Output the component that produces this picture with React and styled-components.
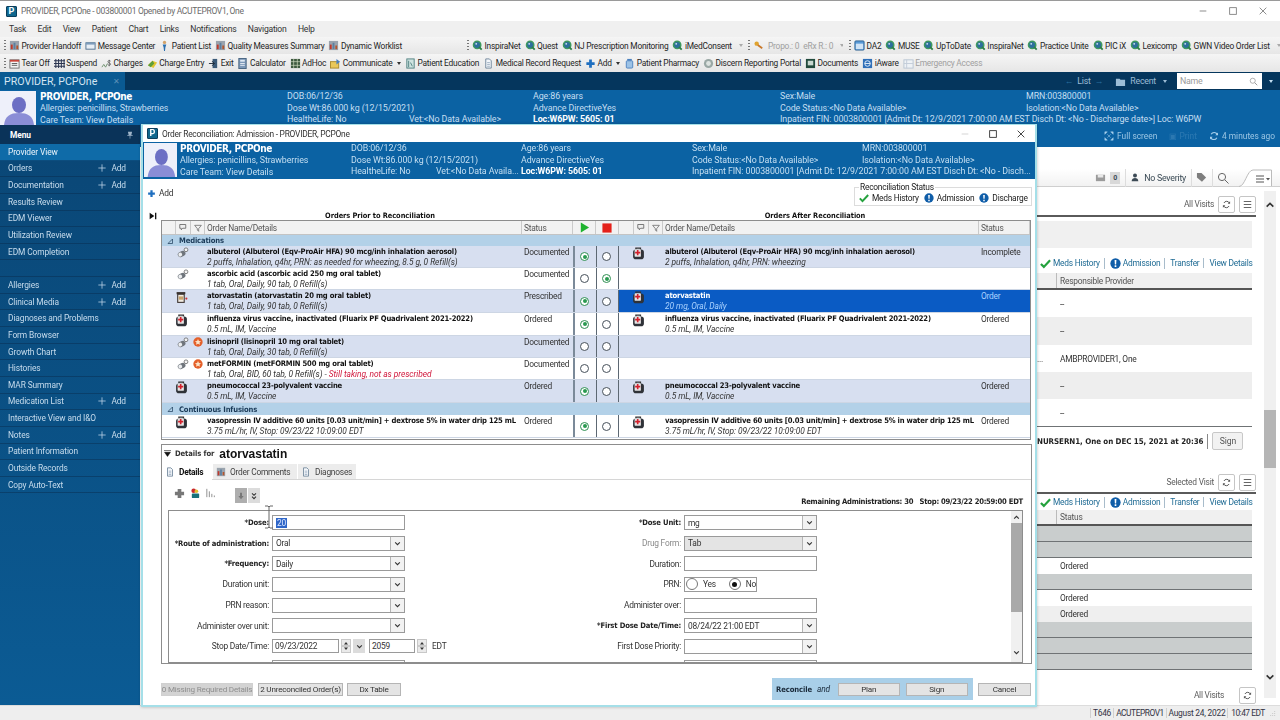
import React from 'react';
import styled, { createGlobalStyle } from 'styled-components';

const GlobalStyle = createGlobalStyle`
  html, body { margin: 0; padding: 0; width: 1280px; height: 720px; overflow: hidden; background: #fff; }
  * { box-sizing: border-box; }
`;

const UI = `Roboto, "Liberation Sans", sans-serif`;
const BOLD = `"DejaVu Sans Condensed", "DejaVu Sans", Roboto, sans-serif`;

const Page = styled.div`
  position: relative; width: 1280px; height: 720px; overflow: hidden; display: flex; flex-direction: column;
  font-family: ${UI}; font-size: 8.4px; letter-spacing: -0.23px; color: #1c1c1c; filter: blur(0.3px);
`;

/* ---------- drawings ---------- */
const Svg = ({ size = 12, children, style }) => (
  <svg width={size} height={size} viewBox="0 0 12 12" style={{ flex: 'none', ...style }}>{children}</svg>
);

const icons = {
  chart: <><rect x="1" y="1" width="10" height="10" fill="#9aa3ad" /><rect x="2" y="5" width="2" height="5" fill="#c0392b" /><rect x="5" y="3" width="2" height="7" fill="#5c7f9f" /><rect x="8" y="6" width="2" height="4" fill="#b4552d" /></>,
  mail: <><rect x="1" y="3" width="10" height="7" fill="#e8eef5" stroke="#50708f" /><path d="M1 3h10v2H1z" fill="#7d9cbc" /></>,
  person: <><circle cx="6" cy="2.6" r="1.8" fill="#d3a36a" /><path d="M4 5h4l-1 3-.5 4h-1L5 8z" fill="#2a6fb0" /></>,
  globe: <><circle cx="5.6" cy="5.4" r="4" fill="#2d6f9c" stroke="#3f9a5e" strokeWidth="1.6" /><path d="M7.6 7.6l3 3" stroke="#2c8048" strokeWidth="2" /><circle cx="4.6" cy="4.2" r="1" fill="#cfe6f2" /></>,
  keys: <><circle cx="4" cy="4" r="2.4" fill="#e0a32e" /><rect x="5" y="5" width="6" height="2" fill="#c9782a" transform="rotate(35 6 6)" /></>,
  window: <><rect x="1" y="1" width="10" height="10" rx="1" fill="#5a9bd8" stroke="#2a5f90" /><rect x="2" y="4" width="8" height="6" fill="#cfe3f6" /></>,
  tear: <><rect x="1" y="2" width="10" height="9" fill="#f5f5f5" stroke="#6b6b6b" /><path d="M1 2h10v2H1z" fill="#c9443a" /><path d="M3 6h6M3 8h6" stroke="#555" /></>,
  suspend: <><path d="M2 1v10M5 1v10M8 1v10M11 1v10M0 3h12M0 6h12M0 9h12" stroke="#2b3550" strokeWidth="1.1" /></>,
  charges: <><path d="M1 10l2-3 2 3 2-4" stroke="#6d8f6d" fill="none" /><path d="M9 2v7M10.5 3.5C10 2.5 7.5 2.5 7.5 4s3 1.2 3 2.7-2.6 1.4-3.2.4" stroke="#444" fill="none" strokeWidth=".7" /></>,
  entry: <><path d="M1 8l5-5 5 2-4 6z" fill="#e3c52f" /><path d="M1 8l5-5 2 3-4 4z" fill="#5f9e3a" /></>,
  exit: <><rect x="5" y="1" width="5" height="10" fill="#3a5a78" /><path d="M1 6h6M4.5 3.5L7 6l-2.5 2.5" stroke="#1d2b39" fill="none" /></>,
  calc: <><rect x="2" y="0.5" width="8" height="11" fill="#7c98b8" stroke="#45617f" /><rect x="3.5" y="2" width="5" height="2" fill="#dfe9f3" /><path d="M3.5 6h5M3.5 8h5" stroke="#e8eef4" /></>,
  adhoc: <><rect x="1" y="1" width="10" height="10" fill="#3e5a3f" /><path d="M4 1v10M8 1v10M1 4h10M1 8h10" stroke="#d8e3c7" strokeWidth=".7" /></>,
  comm: <><rect x="0.5" y="4" width="9" height="7" fill="#eac85a" stroke="#a8892c" /><path d="M7 1l4 3-4 3z" fill="#4b81bf" /></>,
  book: <><rect x="2" y="1" width="8" height="10" fill="#cfe3e0" stroke="#4d7f7f" /><path d="M4 3v7M6 5l2 4" stroke="#4d7f7f" /></>,
  doc: <><path d="M3 1h4l2 2v8H3z" fill="#f3f6fa" stroke="#6e8499" /><path d="M4.5 5h3M4.5 7h3M4.5 9h3" stroke="#7890a8" strokeWidth=".7" /></>,
  plus: <path d="M4.5 1.5h3v3h3v3h-3v3h-3v-3h-3v-3h3z" fill="#1f6fc0" />,
  bottle: <><rect x="3.5" y="1" width="5" height="2" fill="#4b81bf" /><rect x="2.5" y="3" width="7" height="8" rx="1" fill="#9cc2e6" stroke="#4b81bf" /></>,
  report: <><circle cx="6" cy="6" r="5" fill="#9aa8a5" /><circle cx="6" cy="6" r="2.6" fill="#dde3e0" /></>,
  folder: <><rect x="1" y="1" width="10" height="10" fill="#214a3c" /><rect x="3" y="3" width="6" height="5" fill="#c8d8d0" /></>,
  aware: <><rect x="1" y="1" width="10" height="10" fill="#2f6fb8" /><circle cx="6" cy="6" r="3" fill="none" stroke="#e6f0fa" /><path d="M3 6h6" stroke="#e6f0fa" /></>,
  emergency: <><rect x="1" y="2" width="10" height="9" fill="#eef2f6" stroke="#b8c4d2" /><path d="M4 2v9M1 6h10" stroke="#c2ccd8" /></>,
};
const Icon = ({ kind, size }) => <Svg size={size}>{icons[kind]}</Svg>;

const MedBag = () => (
  <Svg size={13}>
    <path d="M3.6 2.6V1h4.2v1.6" fill="none" stroke="#333" strokeWidth="1.2" />
    <rect x="1" y="2.4" width="10" height="9" rx="2.6" fill="#2f3238" />
    <rect x="2.4" y="2" width="5.8" height="7" rx=".8" fill="#e6e6e6" />
    <path d="M4.5 2.8h1.5v1.6h1.6v1.5H6v1.7H4.5V5.9H2.9V4.4h1.6z" fill="#d3202c" />
  </Svg>
);
const PillIcon = () => (
  <Svg size={12}>
    <rect x="0.6" y="4.6" width="8" height="5.2" rx="2.6" fill="#6f757c" transform="rotate(-25 4 7)" />
    <rect x="1.2" y="5.2" width="3.8" height="4" rx="1.9" fill="#eceef0" transform="rotate(-25 4 7)" />
    <circle cx="9" cy="2.8" r="1.9" fill="#f4f4f4" stroke="#666" strokeWidth=".8" />
  </Svg>
);
const BottleIcon = () => (
  <Svg size={13}>
    <rect x="1.5" y="1" width="8" height="2" fill="#3b3330" />
    <rect x="2.5" y="3" width="6" height="7.5" fill="#f2ece2" stroke="#3b3330" />
    <rect x="3.5" y="5" width="4" height="3" fill="#c7a36b" />
    <circle cx="10.5" cy="7" r="1" fill="#c33" />
  </Svg>
);
const StarBadge = () => (
  <Svg size={10}>
    <circle cx="6" cy="6" r="5.6" fill="#e4602a" />
    <path d="M6 2.3l1.1 2.4 2.6.3-1.9 1.7.5 2.6L6 8l-2.3 1.3.5-2.6L2.3 5l2.6-.3z" fill="#fbe3c7" />
  </Svg>
);
const Check = ({ size = 11 }) => (
  <Svg size={size}><path d="M1 6.5l3.2 3.2L11 2.4" fill="none" stroke="#25a23e" strokeWidth="2.4" /></Svg>
);
const Alert = ({ size = 10 }) => (
  <Svg size={size}>
    <circle cx="6" cy="6" r="5.6" fill="#0f5da8" />
    <path d="M5 2.3h2L6.7 7H5.3zM5.1 8h1.8v1.8H5.1z" fill="#fff" />
  </Svg>
);
const RefreshMark = ({ color = '#555', size = 9 }) => (
  <Svg size={size}><path d="M9.8 4A4 4 0 0 0 2.6 4M2.2 8A4 4 0 0 0 9.4 8" fill="none" stroke={color} strokeWidth="1.3" /><path d="M10.8 1.8V5H7.6zM1.2 10.2V7h3.2z" fill={color} /></Svg>
);
const Chevron = ({ up, size = 7, color = '#333' }) => (
  <Svg size={size}><path d={up ? 'M2 8l4-4 4 4' : 'M2 4l4 4 4-4'} fill="none" stroke={color} strokeWidth="1.9" /></Svg>
);
const Avatar = styled(({ className }) => (
  <svg className={className} viewBox="0 0 36 34" preserveAspectRatio="none">
    <rect width="36" height="34" fill="#eef0fa" />
    <ellipse cx="19" cy="14" rx="7" ry="8" fill="#6c6fc4" />
    <path d="M4 34c1-9 6-12 15-12s14 3 15 12z" fill="#8a8dd6" />
  </svg>
))`
  display: block; flex: none; width: ${(p) => p.$w}px; height: ${(p) => p.$h}px;
`;

/* ---------- window chrome ---------- */
const TitleBar = styled.div`
  height: 21px; flex: none; background: #fff; border-top: 1px solid #9a9a9a; display: flex; align-items: center;
  padding-left: 6px; gap: 4px; color: #6a6a6a; font-size: 8.5px; letter-spacing: -0.33px;
`;
const AppLogo = styled.span`
  width: 11px; height: 11px; flex: none; background: #10678d; color: #fff; font: bold 9px/9px ${UI};
  text-align: center; border-radius: 1px; border: 1px solid #0b3e5c; letter-spacing: 0;
`;
const WinControls = styled.div`
  margin-left: auto; display: flex; align-items: center; gap: ${(p) => p.$gap || 20}px; padding-right: ${(p) => p.$pad || 12}px;
`;
const MenuBar = styled.div`
  height: 16px; flex: none; background: #f0f0f0; display: flex; align-items: center; gap: 11.4px; padding-left: 9px; color: #333; font-size: 8.6px;
`;
const ToolBar = styled.div`
  height: ${(p) => p.$h}px; flex: none; background: linear-gradient(#f5f5f5, #e6e6e6); display: flex; align-items: center;
`;
const ToolSection = styled.div`
  width: ${(p) => p.$w}px; flex: none; display: flex; align-items: center; gap: 4px; overflow: hidden;
`;
const Grip = styled.span`
  width: 2px; height: 11px; flex: none; margin: 0 -1px 0 ${(p) => p.$ml || 4}px;
  background: repeating-linear-gradient(#777 0 1px, transparent 1px 3px);
`;
const ToolItem = styled.span`
  display: inline-flex; align-items: center; gap: 1.5px; white-space: nowrap; color: ${(p) => (p.$dim ? '#a0a0a0' : '#1f1f1f')};
`;
const Caret = styled.span`
  width: 0; height: 0; flex: none; border-left: 2.5px solid transparent; border-right: 2.5px solid transparent;
  border-top: 3px solid ${(p) => p.$color || '#333'}; margin-left: 3px; margin-right: ${(p) => p.$mr || 0}px;
`;
const TabBar = styled.div`
  height: 18px; flex: none; background: #05365d; display: flex; align-items: center; color: #9dbdd6; font-size: 8.8px;
`;
const PatientTab = styled.div`
  width: 125px; height: 100%; background: #0a5a92; color: #d5e6f3; font-size: 10.6px; letter-spacing: 0; display: flex; align-items: center; padding-left: 4px;
  justify-content: space-between; padding-right: 5px;
`;
const TabClose = styled.span`
  color: #5c90b8; font-size: 8px;
`;
const ListNav = styled.div`
  margin-left: auto; display: flex; align-items: center; gap: 4px;
`;
const NavArrow = styled.span`
  color: #2a6f9f;
`;
const NameSearch = styled.div`
  width: 85px; height: 16px; background: #fff; color: #9a9a9a; display: flex; align-items: center; justify-content: space-between; padding: 0 4px 0 3px; margin-left: 6px;
`;

/* ---------- patient banner ---------- */
const Banner = styled.div`
  height: ${(p) => p.$h}px; flex: none; background: #0b62a3; display: grid; grid-template-columns: ${(p) => p.$cols};
  color: #c5dff2; font-size: 8.85px; letter-spacing: -0.08px; line-height: 11.7px; overflow: hidden; padding: ${(p) => p.$pad};
`;
const BannerCell = styled.div`
  display: flex; flex-direction: column; white-space: nowrap; min-width: 0;
`;
const BannerName = styled.div`
  color: #fff; font: bold 10px/12px ${BOLD}; letter-spacing: -0.4px;
`;
const Split = styled.div`
  display: grid; grid-template-columns: ${(p) => p.$first}px auto;
`;
const Strong = styled.span`
  color: #fff; font-weight: 700;
`;

/* ---------- app body ---------- */
const Main = styled.div`
  flex: 1; min-height: 0; display: flex;
`;
const SideMenu = styled.div`
  width: 140px; flex: none; background: linear-gradient(#0a4675, #0b5b94); color: #c7dced; font-size: 8.4px; letter-spacing: -0.1px;
  display: flex; flex-direction: column;
`;
const SideHead = styled.div`
  height: 19px; flex: none; background: #0a3359; color: #fff; font-weight: 700; display: flex; align-items: center; justify-content: space-between;
  padding: 1px 6px 0 10px;
`;
const SideRow = styled.div`
  height: 16.65px; flex: none; display: flex; align-items: center; justify-content: space-between; padding: 0 14px 0 8px;
  background: ${(p) => (p.$active ? '#0f6ba8' : 'transparent')}; color: ${(p) => (p.$active ? '#e9f3fb' : '#c7dced')};
  border-bottom: 1px solid rgba(8, 43, 76, 0.45);
`;
const SideAdd = styled.span`
  display: inline-flex; align-items: center; gap: 5px;
`;
const Content = styled.div`
  flex: 1; min-width: 0; display: flex; flex-direction: column;
`;
const TopBar = styled.div`
  height: 22px; flex: none; background: #0b62a3; display: flex; align-items: center; justify-content: flex-end; gap: 12px; padding-right: 5px;
  color: #9cc6e4; letter-spacing: 0;
`;
const TopItem = styled.span`
  display: inline-flex; align-items: center; gap: 3px; opacity: ${(p) => (p.$faint ? 0.22 : 1)};
`;
const Body = styled.div`
  flex: 1; min-height: 0; display: flex; justify-content: flex-end; background: #fff;
`;
const RightPane = styled.div`
  width: 243px; flex: none; display: flex; flex-direction: column;
`;
const TabStrip = styled.div`
  margin-top: 22px; height: 18px; flex: none; border-bottom: 1px solid #cfcfcf; display: flex; align-items: center; justify-content: flex-end;
  padding-right: 8px; gap: 4px; background: linear-gradient(#fff, #f2f2f2); color: #3a4a55; font-size: 8.8px;
`;
const CountBox = styled.span`
  width: 10px; height: 12px; background: #d8d8d8; text-align: center; line-height: 12px; font-weight: 700; font-size: 7px;
`;
const StripDivider = styled.span`
  width: 1px; height: 18px; background: #ddd; margin: 0 0.5px;
`;
const StripSpacer = styled.span`
  width: ${(p) => p.$w}px; flex: none;
`;
const PaneRow = styled.div`
  flex: 1; min-height: 0; display: flex;
`;
const PaneMain = styled.div`
  width: 219px; flex: none; display: flex; flex-direction: column; overflow: hidden;
`;
const VisitBar = styled.div`
  height: 18px; flex: none; margin-top: ${(p) => p.$top}px; display: flex; align-items: center; justify-content: flex-end; gap: 4px; color: #5c5c5c;
`;
const MiniButton = styled.span`
  width: 17px; height: 17px; flex: none; background: #fff; border: 1px solid #c5c5c5; border-radius: 2px; display: flex; align-items: center; justify-content: center;
  margin-left: ${(p) => p.$ml || 0}px;
`;
const HeavyLine = styled.div`
  height: 2px; flex: none; background: #5a5a5a; margin-top: ${(p) => p.$top}px;
`;
const GrayBox = styled.div`
  height: 27px; flex: none; background: #f0f0f0; margin: 4px 4px 0 0;
`;
const LinkRow = styled.div`
  height: 14px; flex: none; margin-top: ${(p) => p.$top}px; display: flex; align-items: center; padding-left: 3px; color: #1f6b94; white-space: nowrap;
`;
const LinkPart = styled.span`
  display: inline-flex; align-items: center; gap: 2px; padding-right: 4px; margin-right: 5px;
  border-right: ${(p) => (p.$last ? 'none' : '1px solid #a8bccb')};
`;
const PaneTable = styled.div`
  width: 215px; flex: none; margin-top: ${(p) => p.$top || 0}px;
`;
const PaneHead = styled.div`
  height: ${(p) => p.$h}px; background: #f0f0f0; border-bottom: 2px solid #555; color: #555; display: flex; align-items: center;
`;
const PaneHeadLabel = styled.span`
  margin-left: 19px; height: 100%; border-left: 1px solid #bbb; padding-left: 3px; display: flex; align-items: center;
`;
const PaneCell = styled.div`
  height: ${(p) => p.$h}px; display: flex; align-items: center; padding-left: 23px; white-space: nowrap; overflow: hidden;
  background: ${(p) => p.$bg}; border-bottom: ${(p) => (p.$line ? '1px solid #6f7375' : 'none')}; color: #333;
`;
const PaneClip = styled.span`
  width: 10px; margin-left: -23px; margin-right: 13px; overflow: hidden; display: inline-block;
`;
const SignedLine = styled.div`
  height: 18px; flex: none; margin-top: 5px; display: flex; align-items: center; font: bold 7.9px ${BOLD}; letter-spacing: -0.05px; white-space: nowrap; color: #222;
`;
const SignDivider = styled.span`
  width: 1px; height: 15px; flex: none; background: #888; margin: 0 4px;
`;
const SignBtn = styled.span`
  width: 31px; height: 18px; flex: none; border: 1px solid #c8c8c8; background: #f2f2f2; border-radius: 2px; color: #555; display: flex; align-items: center; justify-content: center;
  font: 8.6px ${UI};
`;
const PaneBar = styled.div`
  width: 12px; flex: none; margin: 4px 0 7px 8px; background: #f0f0f0; display: flex; flex-direction: column; align-items: center; padding-top: 9px;
`;
const BarThumb = styled.div`
  width: 100%; height: 58px; flex: none; background: #b5b5b5; margin-top: ${(p) => p.$top}px;
`;
const BarArrow = styled.span`
  display: flex; flex: none; margin-top: ${(p) => p.$top || 0}px;
`;
const StatusBar = styled.div`
  height: 15px; flex: none; background: #eeeeee; border-top: 1px solid #dcdcdc; display: flex; align-items: center; justify-content: flex-end; padding-right: 4px; color: #334;
`;
const StatusCell = styled.span`
  width: ${(p) => p.$w}px; flex: none; text-align: center; white-space: nowrap; border-left: 1px solid #d0d0d0;
`;
const Letters = styled.span`
  letter-spacing: ${(p) => p.$s}px;
`;

/* ---------- reconciliation modal ---------- */
const Modal = styled.div`
  position: absolute; left: 141px; top: 124px; width: 896px; height: 583px; background: #fff; border: 2px solid #a5dfe8; border-top-width: 1px;
  display: flex; flex-direction: column; box-shadow: 0 0 3px rgba(0, 0, 0, 0.25);
`;
const ModalTitle = styled.div`
  height: 17px; flex: none; display: flex; align-items: center; gap: 4px; padding-left: 4px; color: #333;
`;
const ModalBody = styled.div`
  flex: 1; min-height: 0; display: flex; flex-direction: column; padding: 0 3px 0 18px;
`;
const AddRow = styled.div`
  height: 31px; flex: none; display: flex; justify-content: space-between; margin-left: -14px;
`;
const AddButton = styled.span`
  display: inline-flex; align-items: center; gap: 3px; margin-top: 8px; height: 12px; color: #333;
`;
const StatusBox = styled.fieldset`
  width: 178px; height: 22px; margin: 5px 0 0; padding: 0 0 0 4px; border: 1px solid #dcdcdc; display: flex; align-items: center; gap: 5px; min-width: 0;
  color: #222; white-space: nowrap;
  legend { padding: 0 1px; line-height: 7px; }
`;
const StatusItem = styled.span`
  display: inline-flex; align-items: center; gap: 3px;
`;
const SideTitles = styled.div`
  height: 10px; flex: none; display: grid; grid-template-columns: 12px 438px 432px; margin-left: -12px; padding-top: 1px; align-items: center;
  font: bold 7.4px/10px ${BOLD}; letter-spacing: -0.05px; color: #111;
`;
const CenterTitle = styled.span`
  text-align: center;
`;
const GRID = '43px 317px 51px 23px 23px 44px 316px 51px';
const OrderTable = styled.div`
  width: 870px; height: 220px; flex: none; border: 1px solid #8d8d8d; background: #fff; overflow: hidden;
`;
const HeadRow = styled.div`
  height: 14px; display: grid; grid-template-columns: ${GRID}; background: #f2f2f2; border-bottom: 1px solid #c4c4c4; color: #555;
`;
const HeadCell = styled.div`
  display: flex; align-items: center; justify-content: ${(p) => (p.$center ? 'center' : p.$end ? 'flex-end' : 'flex-start')};
  padding-left: ${(p) => (p.$center || p.$end ? 0 : 2)}px; border-right: 1px solid #cacaca; min-width: 0;
`;
const HeadSlot = styled.span`
  width: ${(p) => p.$w}px; height: 100%; flex: none; border-left: 1px solid #cacaca; display: flex; align-items: center; justify-content: center;
`;
const GroupRow = styled.div`
  height: ${(p) => p.$h}px; background: #b3d1e8; display: flex; align-items: center; gap: 6px; padding-left: 5px; font: bold 7.6px ${BOLD}; letter-spacing: -0.15px; color: #1a3a58;
`;
const Row = styled.div`
  height: ${(p) => p.$h}px; display: grid; grid-template-columns: ${GRID}; background: ${(p) => (p.$shade ? '#d7dff0' : '#fff')}; border-bottom: 1px solid #cdd6e4;
`;
const IconCell = styled.div`
  display: flex; align-items: flex-start; padding: 1px 0 0 ${(p) => p.$pad}px; gap: 4px; background: ${(p) => (p.$sel ? '#0a5bc4' : 'transparent')};
`;
const NameCell = styled.div`
  padding: 1px 0 0 2px; white-space: nowrap; overflow: hidden; background: ${(p) => (p.$sel ? '#0a5bc4' : 'transparent')};
`;
const OrderName = styled.div`
  font: bold 7.6px/10px ${BOLD}; letter-spacing: -0.19px; color: ${(p) => (p.$sel ? '#fff' : '#111')};
`;
const OrderDetail = styled.div`
  font-style: italic; line-height: 10.5px; letter-spacing: -0.04px; color: ${(p) => (p.$sel ? '#a9d2ff' : '#333')};
`;
const Warning = styled.span`
  color: #d0183c;
`;
const StatusCellText = styled.div`
  padding: 1px 0 0 2px; line-height: 10px; color: ${(p) => (p.$sel ? '#a9d2ff' : '#333')}; background: ${(p) => (p.$sel ? '#0a5bc4' : 'transparent')};
`;
const RadioCell = styled.div`
  display: flex; align-items: center; justify-content: center; padding-right: 2px;
  border-left: ${(p) => (p.$heavy ? '2px solid #7b8a99' : '1px solid #5d6873')};
  border-right: ${(p) => (p.$end ? '1px solid #5d6873' : 'none')};
`;
const Radio = styled.span`
  width: 9px; height: 9px; border-radius: 50%; background: #fff; border: 1px solid ${(p) => (p.$on ? '#2f8f52' : '#46505a')}; display: flex; align-items: center; justify-content: center;
  &::after { content: ''; width: 4px; height: 4px; border-radius: 50%; background: ${(p) => (p.$on ? '#2a9a50' : 'transparent')}; }
`;
const DetailsBox = styled.div`
  width: 871px; height: 220px; flex: none; margin-top: 4px; border: 1px solid #8d8d8d; display: flex; flex-direction: column;
`;
const DetailsHead = styled.div`
  height: 19px; flex: none; display: flex; align-items: center; gap: 4px; padding: 0 0 2px 2px; font: bold 7.6px ${BOLD}; letter-spacing: -0.1px; color: #333;
`;
const DetailsDrug = styled.span`
  font: bold 12px "Liberation Sans", sans-serif; letter-spacing: 0; color: #111; margin-left: 1px;
`;
const Tabs = styled.div`
  height: 16px; flex: none; display: flex; gap: 1px; border-bottom: 1px solid #d6d6d6;
`;
const Tab = styled.div`
  width: ${(p) => p.$w}px; height: ${(p) => (p.$active ? 16 : 15)}px; display: flex; align-items: center; gap: 4px; padding-left: 3px; color: ${(p) => (p.$active ? '#111' : '#444')};
  font-weight: ${(p) => (p.$active ? 700 : 400)}; background: ${(p) => (p.$active ? '#fff' : '#ececec')};
`;
const DetailTools = styled.div`
  height: 30px; flex: none; display: flex; align-items: flex-start; padding: 8px 8px 0 12px; gap: 5px;
`;
const ToolSquare = styled.span`
  width: 12px; height: 15px; flex: none; background: ${(p) => (p.$dark ? '#aeaeae' : '#dcdcdc')}; display: flex; align-items: center; justify-content: center;
  margin-left: ${(p) => p.$ml || 0}px;
`;
const Remaining = styled.span`
  margin: 9px 0 0 auto; font: bold 7.6px ${BOLD}; letter-spacing: -0.25px; color: #222;
`;
const FormBox = styled.div`
  margin: 0 8px 0 6px; flex: 1; min-height: 0; border: 1px solid #8d8d8d; display: flex; overflow: hidden;
`;
const FormGrid = styled.div`
  flex: 1; min-width: 0; display: grid; grid-template-columns: 100px 133px 273px 133px; grid-auto-rows: 15px; row-gap: 5.67px; column-gap: 3px; padding-top: 4px; align-content: start;
`;
const Label = styled.label`
  text-align: right; align-self: center; white-space: nowrap; color: ${(p) => (p.$dim ? '#8a8a8a' : '#333')};
  ${(p) => p.$req && `font: bold 7.6px ${BOLD}; letter-spacing: -0.15px; color: #222;`}
`;
const Field = styled.div`
  height: 15px; display: flex; align-items: center; border: 1px solid #9a9a9a; background: ${(p) => (p.$gray ? '#e4e4e4' : '#fff')}; padding-left: 3px; color: #333; min-width: 0;
`;
const Selection = styled.span`
  background: #2f66c8; color: #dfe9ff; padding: 0 1px;
`;
const DropBtn = styled.span`
  margin-left: auto; width: 14px; height: 13px; flex: none; border-left: 1px solid #b4b4b4; background: #f2f2f2; display: flex; align-items: center; justify-content: center;
`;
const RadioGroup = styled.div`
  width: 73px; height: 15px; border: 1px solid #9a9a9a; display: flex; align-items: center; padding-left: 1px; gap: 13px; background: #fff;
`;
const FormRadio = styled.span`
  display: inline-flex; align-items: center; gap: 5px; color: #333;
`;
const RoundBtn = styled.span`
  width: 12px; height: 12px; border-radius: 50%; border: 1px solid #777; display: flex; align-items: center; justify-content: center; background: #fff;
  &::after { content: ''; width: 5px; height: 5px; border-radius: 50%; background: ${(p) => (p.$on ? '#111' : 'transparent')}; }
`;
const DateRow = styled.div`
  display: flex; align-items: center; width: 180px;
`;
const DateInput = styled.div`
  width: ${(p) => p.$w}px; height: 14px; flex: none; border: 1px solid #9a9a9a; padding-left: 2px; display: flex; align-items: center; background: #fff; color: #333;
`;
const Spin = styled.span`
  width: 10px; height: 14px; flex: none; margin-left: 2px; display: flex; background: #eaeaea; border: 1px solid #c8c8c8;
`;
const SmallDrop = styled.span`
  width: 12px; height: 14px; flex: none; margin: 0 4px 0 2px; background: #dcdcdc; display: flex; align-items: center; justify-content: center;
`;
const TimeZone = styled.span`
  margin-left: 5px; color: #333;
`;
const FormBar = styled.div`
  width: 11px; flex: none; background: #f0f0f0; display: flex; flex-direction: column; align-items: center; padding-top: 3px;
`;
const FormThumb = styled.div`
  width: 100%; height: 89px; margin-top: 2px; background: #a9a9a9; flex: none;
`;
const IBeam = styled.svg`
  position: absolute; left: 264px; top: 505px; z-index: 3;
`;
const Footer = styled.div`
  flex: 1; display: flex; align-items: center; padding-top: 9px;
`;
const FootBtn = styled.span`
  width: ${(p) => p.$w}px; height: 13px; flex: none; margin-right: ${(p) => p.$mr || 0}px; background: ${(p) => (p.$faded ? '#d3d3d3' : '#e4e4e4')}; border: 1px solid ${(p) => (p.$faded ? '#d0d0d0' : '#b5b5b5')};
  display: flex; align-items: center; justify-content: center; color: ${(p) => (p.$faded ? '#8e8e8e' : '#333')}; white-space: nowrap; font-size: 8.1px; letter-spacing: -0.2px;
`;
const ReconcileBox = styled.div`
  width: 201px; height: 22px; flex: none; margin-left: auto; background: #a9cfe8; display: flex; align-items: center; padding-left: 4px; color: #1a2a3a;
`;
const ReconcileLabel = styled.span`
  font: bold 7.6px ${BOLD}; letter-spacing: -0.1px; white-space: nowrap;
`;
const AndWord = styled.span`
  font-style: italic; margin: 0 8px 0 5px;
`;
const CancelWrap = styled.div`
  margin: 0 1px 0 5px;
`;

/* ---------- data ---------- */
const topLeft = [['chart', 'Provider Handoff'], ['mail', 'Message Center'], ['person', 'Patient List'], ['chart', 'Quality Measures Summary'], ['chart', 'Dynamic Worklist']];
const topMid = [['globe', 'InspiraNet'], ['globe', 'Quest'], ['globe', 'NJ Prescription Monitoring'], ['globe', 'iMedConsent']];
const topRight = [['window', 'DA2'], ['globe', 'MUSE'], ['globe', 'UpToDate'], ['globe', 'InspiraNet'], ['globe', 'Practice Unite'], ['globe', 'PIC iX'], ['globe', 'Lexicomp'], ['globe', 'GWN Video Order List']];
const secondRow = [['tear', 'Tear Off'], ['suspend', 'Suspend'], ['charges', 'Charges'], ['entry', 'Charge Entry'], ['exit', 'Exit'], ['calc', 'Calculator'], ['adhoc', 'AdHoc'], ['comm', 'Communicate', true], ['book', 'Patient Education'], ['doc', 'Medical Record Request'], ['plus', 'Add', true], ['bottle', 'Patient Pharmacy'], ['report', 'Discern Reporting Portal'], ['folder', 'Documents'], ['aware', 'iAware']];

const sideItems = [['Orders', 1], ['Documentation', 1], ['Results Review'], ['EDM Viewer'], ['Utilization Review'], ['EDM Completion'], [''], ['Allergies', 1], ['Clinical Media', 1], ['Diagnoses and Problems'], ['Form Browser'], ['Growth Chart'], ['Histories'], ['MAR Summary'], ['Medication List', 1], ['Interactive View and I&O'], ['Notes', 1], ['Patient Information'], ['Outside Records'], ['Copy Auto-Text']];

const orders = [
  { h: 22, icon: 'pill', name: 'albuterol (Albuterol (Eqv-ProAir HFA) 90 mcg/inh inhalation aerosol)', detail: '2 puffs, Inhalation, q4hr, PRN: as needed for wheezing, 8.5 g, 0 Refill(s)', status: 'Documented', go: true, after: { name: 'albuterol (Albuterol (Eqv-ProAir HFA) 90 mcg/inh inhalation aerosol)', detail: '2 puffs, Inhalation, q4hr, PRN: wheezing', status: 'Incomplete' } },
  { h: 22, icon: 'pill', name: 'ascorbic acid (ascorbic acid 250 mg oral tablet)', detail: '1 tab, Oral, Daily, 90 tab, 0 Refill(s)', status: 'Documented', stop: true },
  { h: 23, icon: 'bottle', name: 'atorvastatin (atorvastatin 20 mg oral tablet)', detail: '1 tab, Oral, Daily, 90 tab, 0 Refill(s)', status: 'Prescribed', go: true, sel: true, after: { name: 'atorvastatin', detail: '20 mg, Oral, Daily', status: 'Order' } },
  { h: 23, icon: 'bag', name: 'influenza virus vaccine, inactivated (Fluarix PF Quadrivalent 2021-2022)', detail: '0.5 mL, IM, Vaccine', status: 'Ordered', go: true, after: { name: 'influenza virus vaccine, inactivated (Fluarix PF Quadrivalent 2021-2022)', detail: '0.5 mL, IM, Vaccine', status: 'Ordered' } },
  { h: 22, icon: 'pill', star: true, name: 'lisinopril (lisinopril 10 mg oral tablet)', detail: '1 tab, Oral, Daily, 30 tab, 0 Refill(s)', status: 'Documented' },
  { h: 22, icon: 'pill', star: true, name: 'metFORMIN (metFORMIN 500 mg oral tablet)', detail: '1 tab, Oral, BID, 60 tab, 0 Refill(s) - ', warning: 'Still taking, not as prescribed', status: 'Documented' },
  { h: 23, icon: 'bag', name: 'pneumococcal 23-polyvalent vaccine', detail: '0.5 mL, IM, Vaccine', status: 'Ordered', go: true, after: { name: 'pneumococcal 23-polyvalent vaccine', detail: '0.5 mL, IM, Vaccine', status: 'Ordered' } },
];
const infusion = { h: 23, icon: 'bag', name: 'vasopressin IV additive 60 units [0.03 unit/min] + dextrose 5% in water drip 125 mL', detail: '3.75 mL/hr, IV, Stop: 09/23/22 10:09:00 EDT', status: 'Ordered', go: true, after: { name: 'vasopressin IV additive 60 units [0.03 unit/min] + dextrose 5% in water drip 125 mL', detail: '3.75 mL/hr, IV, Stop: 09/23/22 10:09:00 EDT', status: 'Ordered' } };

const visitRows = [['#c9cdcd'], ['#c9cdcd'], ['#fff', 'Ordered'], ['#c9cdcd'], ['#fff', 'Ordered'], ['#efefef', 'Ordered'], ['#c9cdcd'], ['#c9cdcd'], ['#c9cdcd']];

const SourceIcon = ({ kind }) => (kind === 'pill' ? <PillIcon /> : kind === 'bottle' ? <BottleIcon /> : <MedBag />);

const OrderRow = ({ order, shade }) => {
  const { after, sel } = order;
  return (
    <Row $h={order.h} $shade={shade}>
      <IconCell $pad={order.icon === 'pill' ? 15 : 13}>
        <SourceIcon kind={order.icon} />
        {order.star && <StarBadge />}
      </IconCell>
      <NameCell>
        <OrderName>{order.name}</OrderName>
        <OrderDetail>{order.detail}{order.warning && <Warning>{order.warning}</Warning>}</OrderDetail>
      </NameCell>
      <StatusCellText>{order.status}</StatusCellText>
      <RadioCell $heavy><Radio $on={order.go} /></RadioCell>
      <RadioCell $end><Radio $on={order.stop} /></RadioCell>
      <IconCell $pad={13} $sel={sel}>{after && <MedBag />}</IconCell>
      <NameCell $sel={sel}>
        {after && <OrderName $sel={sel}>{after.name}</OrderName>}
        {after && <OrderDetail $sel={sel}>{after.detail}</OrderDetail>}
      </NameCell>
      <StatusCellText $sel={sel}>{after && after.status}</StatusCellText>
    </Row>
  );
};

const HeadIcons = () => (
  <HeadCell $end>
    <HeadSlot $w={15}><Svg size={9}><path d="M1 2h8v5H5L3 9V7H1z" fill="#eee" stroke="#555" /></Svg></HeadSlot>
    <HeadSlot $w={14}><Svg size={8}><path d="M1 2h10L7 7v4L5 9V7z" fill="none" stroke="#555" /></Svg></HeadSlot>
  </HeadCell>
);

const TableHead = () => (
  <HeadRow>
    <HeadIcons />
    <HeadCell>Order Name/Details</HeadCell>
    <HeadCell>Status</HeadCell>
    <HeadCell $center><Svg size={11}><path d="M2 0.5l9 5.5-9 5.5z" fill="#1fb32f" /></Svg></HeadCell>
    <HeadCell $center><Svg size={10}><rect x="0.5" y="0.5" width="11" height="11" fill="#e4211a" /></Svg></HeadCell>
    <HeadIcons />
    <HeadCell>Order Name/Details</HeadCell>
    <HeadCell>Status</HeadCell>
  </HeadRow>
);

const GroupMark = () => <Svg size={6}><path d="M11 2v9H2z" fill="none" stroke="#1a3a58" strokeWidth="1.4" /></Svg>;

const FieldSelect = ({ value, gray }) => (
  <Field $gray={gray}>{value}<DropBtn><Chevron /></DropBtn></Field>
);

const SpinBox = () => (
  <Spin>
    <svg width="8" height="12" viewBox="0 0 8 12"><path d="M4 2l2 2.4H2zM4 10L2 7.6h4z" fill="#333" /><path d="M0 6h8" stroke="#aaa" /></svg>
  </Spin>
);

const LinkBar = ({ top }) => (
  <LinkRow $top={top}>
    <LinkPart><Check />Meds History</LinkPart>
    <LinkPart><Alert size={11} />Admission</LinkPart>
    <LinkPart>Transfer</LinkPart>
    <LinkPart $last>View Details</LinkPart>
  </LinkRow>
);

const HamburgerMark = () => <Svg size={9}><path d="M1 2h10M1 6h10M1 10h10" stroke="#555" strokeWidth="1.2" /></Svg>;

const PatientInfo = ({ small }) => (
  <>
    <BannerCell>
      <BannerName>PROVIDER, PCPOne</BannerName>
      <div>Allergies: penicillins, Strawberries</div>
      <div>Care Team: View Details</div>
    </BannerCell>
    <BannerCell>
      <div>DOB:06/12/36</div>
      <div>Dose Wt:86.000 kg (12/15/2021)</div>
      <Split $first={small ? 85 : 122}><span>HealtheLife: No</span><span>{small ? 'Vet:<No Data Availa...' : 'Vet:<No Data Available>'}</span></Split>
    </BannerCell>
    <BannerCell>
      <div>Age:86 years</div>
      <div>Advance DirectiveYes</div>
      <Strong>Loc:W6PW: 5605: 01</Strong>
    </BannerCell>
    <BannerCell>
      <div>Sex:Male</div>
      <div>Code Status:&lt;No Data Available&gt;</div>
      <div>{small ? 'Inpatient FIN: 0003800001 [Admit Dt: 12/9/2021 7:00:00 AM EST Disch Dt: <No - Disch...' : 'Inpatient FIN: 0003800001 [Admit Dt: 12/9/2021 7:00:00 AM EST Disch Dt: <No - Discharge date>] Loc: W6PW'}</div>
    </BannerCell>
    <BannerCell>
      <div>MRN:003800001</div>
      <div>Isolation:&lt;No Data Available&gt;</div>
    </BannerCell>
  </>
);

const App = () => (
  <Page>
    <GlobalStyle />
    <TitleBar>
      <AppLogo>P</AppLogo>
      PROVIDER, PCPOne - 003800001 Opened by ACUTEPROV1, One
      <WinControls>
        <Svg size={10}><path d="M2 6h8" stroke="#777" /></Svg>
        <Svg size={10}><rect x="2" y="2" width="8" height="8" fill="none" stroke="#777" /></Svg>
        <Svg size={10}><path d="M2 2l8 8M10 2l-8 8" stroke="#777" /></Svg>
      </WinControls>
    </TitleBar>
    <MenuBar>
      {['Task', 'Edit', 'View', 'Patient', 'Chart', 'Links', 'Notifications', 'Navigation', 'Help'].map((m) => <span key={m}>{m}</span>)}
    </MenuBar>
    <ToolBar $h={17}>
      <ToolSection $w={457}>
        <Grip />
        {topLeft.map(([k, t]) => <ToolItem key={t}><Icon kind={k} size={11} />{t}</ToolItem>)}
      </ToolSection>
      <ToolSection $w={289}>
        <Grip $ml={10} />
        {topMid.map(([k, t]) => <ToolItem key={t}><Icon kind={k} size={11} />{t}</ToolItem>)}
        <Caret $color="#aaa" />
      </ToolSection>
      <ToolSection $w={97}>
        <Grip $ml={2} />
        <ToolItem><Icon kind="keys" size={11} /></ToolItem>
        <ToolItem $dim>Propo.: 0</ToolItem>
        <ToolItem $dim>eRx R.: 0</ToolItem>
        <Caret $color="#aaa" />
      </ToolSection>
      <ToolSection $w={437}>
        <Grip $ml={6} />
        {topRight.map(([k, t]) => <ToolItem key={t + k}><Icon kind={k} size={11} />{t}</ToolItem>)}
        <Caret $color="#aaa" />
      </ToolSection>
    </ToolBar>
    <ToolBar $h={18}>
      <ToolSection $w={1280}>
        <Grip />
        {secondRow.map(([k, t, drop]) => <ToolItem key={t}><Icon kind={k} size={11} />{t}{drop && <Caret />}</ToolItem>)}
        <ToolItem $dim><Icon kind="emergency" size={11} />Emergency Access</ToolItem>
      </ToolSection>
    </ToolBar>
    <TabBar>
      <PatientTab>PROVIDER, PCPOne<TabClose>✕</TabClose></PatientTab>
      <ListNav>
        <NavArrow>←</NavArrow>List<NavArrow>→</NavArrow>
        <Svg size={11} style={{ marginLeft: 8 }}><path d="M1 3h4l1 1h5v7H1z" fill="#9dbdd6" /></Svg>
        Recent<Caret $color="#9dbdd6" />
        <NameSearch>Name<Svg size={9}><circle cx="5" cy="5" r="3.4" fill="none" stroke="#999" /><path d="M7.5 7.5l3.5 3.5" stroke="#999" strokeWidth="1.3" /></Svg></NameSearch>
        <Caret $color="#c5dff2" $mr={7} />
      </ListNav>
    </TabBar>
    <Banner $h={35} $cols="40px 247px 246px 247px 246px 1fr" $pad="1px 0 0 0">
      <Avatar $w={36} $h={34} />
      <PatientInfo />
    </Banner>
    <Main>
      <SideMenu>
        <SideHead>Menu<Svg size={8}><path d="M3 1h6v1L8 6h2v1H6.5v4L6 12l-.5-1V7H2V6h2L3 2z" fill="#9fb4c8" /></Svg></SideHead>
        <SideRow $active>Provider View</SideRow>
        {sideItems.map(([label, add], i) => (
          <SideRow key={label + i}>
            {label}
            {add && <SideAdd><Svg size={8}><path d="M6 0.5v11M0.5 6h11" stroke="#c7dced" strokeWidth="1.1" /></Svg>Add</SideAdd>}
          </SideRow>
        ))}
      </SideMenu>
      <Content>
        <TopBar>
          <TopItem><Svg size={10}><path d="M1 1h3L1 4zM11 1H8l3 3zM1 11h3l-3-3zM11 11H8l3-3zM4 4l4 4M8 4l-4 4" fill="#a9d0ec" stroke="#a9d0ec" strokeWidth=".6" /></Svg>Full screen</TopItem>
          <TopItem $faint>▣ Print</TopItem>
          <TopItem><RefreshMark color="#a9d0ec" size={10} />4 minutes ago</TopItem>
        </TopBar>
        <Body>
          <RightPane>
            <TabStrip>
              <Svg size={11}><path d="M1 3h10v7H1z" fill="#9b9b9b" /><path d="M3 3h6v3H3z" fill="#e8e8e8" /></Svg>
              <CountBox>0</CountBox>
              <StripDivider />
              <Svg size={10}><circle cx="6" cy="3" r="2.4" fill="#3c4a55" /><path d="M2 10c0-3 2-4 4-4s4 1 4 4z" fill="#3c4a55" /></Svg>
              No Severity
              <StripDivider />
              <Svg size={11}><path d="M1 1h5l5 5-4.5 4.5L1 6z" fill="#7d7d7d" /></Svg>
              <StripDivider />
              <Svg size={12}><circle cx="5" cy="5" r="3.6" fill="none" stroke="#666" /><path d="M8 8l3.5 3.5" stroke="#666" /></Svg>
              <StripSpacer $w={2} />
              <svg width="33" height="18" viewBox="0 0 33 18" style={{ flex: 'none' }}>
                <path d="M0 17.5C6 17.5 8 1 14 1H32.5V17" fill="#fff" stroke="#bbb" />
                <path d="M17 7h8M17 10h8M17 13h8" stroke="#555" />
                <path d="M27 9h4l-2 2.5z" fill="#555" />
              </svg>
            </TabStrip>
            <PaneRow>
              <PaneMain>
                <VisitBar $top={8}>
                  All Visits
                  <MiniButton><RefreshMark /></MiniButton>
                  <MiniButton><HamburgerMark /></MiniButton>
                </VisitBar>
                <HeavyLine $top={2} />
                <GrayBox />
                <LinkBar top={8} />
                <PaneTable $top={3}>
                  <PaneHead $h={17}><PaneHeadLabel>Responsible Provider</PaneHeadLabel></PaneHead>
                  <PaneCell $h={27} $bg="#fff">--</PaneCell>
                  <PaneCell $h={28} $bg="#eee">--</PaneCell>
                  <PaneCell $h={27} $bg="#fff"><PaneClip>...</PaneClip>AMBPROVIDER1, One</PaneCell>
                  <PaneCell $h={27} $bg="#eee">--</PaneCell>
                  <PaneCell $h={28} $bg="#fff" $line>--</PaneCell>
                </PaneTable>
                <SignedLine>
                  NURSERN1, One on DEC 15, 2021 at 20:36
                  <SignDivider />
                  <SignBtn>Sign</SignBtn>
                </SignedLine>
                <VisitBar $top={23}>
                  Selected Visit
                  <MiniButton><RefreshMark /></MiniButton>
                  <MiniButton><HamburgerMark /></MiniButton>
                </VisitBar>
                <HeavyLine $top={1} />
                <LinkBar top={1} />
                <PaneTable $top={1}>
                  <PaneHead $h={16}><PaneHeadLabel>Status</PaneHeadLabel></PaneHead>
                  {visitRows.map(([bg, text], i) => <PaneCell key={i} $h={16} $bg={bg} $line={bg === '#c9cdcd'}>{text}</PaneCell>)}
                </PaneTable>
                <VisitBar $top={16}>
                  All Visits
                  <MiniButton $ml={11}><RefreshMark /></MiniButton>
                </VisitBar>
              </PaneMain>
              <PaneBar>
                <BarArrow><Chevron up size={10} /></BarArrow>
                <BarThumb $top={200} />
                <BarArrow $top={204}><Chevron size={10} /></BarArrow>
              </PaneBar>
            </PaneRow>
          </RightPane>
        </Body>
      </Content>
    </Main>
    <StatusBar>
      <StatusCell $w={23}>T646</StatusCell>
      <StatusCell $w={53}><Letters $s={-0.45}>ACUTEPROV1</Letters></StatusCell>
      <StatusCell $w={61}>August 24, 2022</StatusCell>
      <StatusCell $w={41}><Letters $s={-0.5}>10:47 EDT</Letters></StatusCell>
      <Svg size={8}><path d="M10 3v1M7 6v1M10 6v1M4 9v1M7 9v1M10 9v1" stroke="#999" /></Svg>
    </StatusBar>

    <Modal>
      <ModalTitle>
        <AppLogo>P</AppLogo>
        Order Reconciliation: Admission - PROVIDER, PCPOne
        <WinControls $pad={9} $gap={18}>
          <Svg size={10}><path d="M2 6h8" stroke="#ccc" /></Svg>
          <Svg size={10}><rect x="2" y="2" width="8" height="8" fill="none" stroke="#222" /></Svg>
          <Svg size={10}><path d="M2 2l8 8M10 2l-8 8" stroke="#222" /></Svg>
        </WinControls>
      </ModalTitle>
      <Banner $h={37} $cols="36px 171px 170px 171px 170px 1fr" $pad="1px 0 0 1px">
        <Avatar $w={33} $h={34} />
        <PatientInfo small />
      </Banner>
      <ModalBody>
        <AddRow>
          <AddButton><Icon kind="plus" size={9} />Add</AddButton>
          <StatusBox>
            <legend>Reconciliation Status</legend>
            <StatusItem><Check size={10} />Meds History</StatusItem>
            <StatusItem><Alert />Admission</StatusItem>
            <StatusItem><Alert />Discharge</StatusItem>
          </StatusBox>
        </AddRow>
        <SideTitles>
          <Svg size={8}><path d="M1 1l7 5-7 5zM9 1h2v10H9z" fill="#111" /></Svg>
          <CenterTitle>Orders Prior to Reconciliation</CenterTitle>
          <CenterTitle>Orders After Reconciliation</CenterTitle>
        </SideTitles>
        <OrderTable>
          <TableHead />
          <GroupRow $h={11}><GroupMark />Medications</GroupRow>
          {orders.map((o, i) => <OrderRow key={o.name} order={o} shade={i % 2 === 0} />)}
          <GroupRow $h={12}><GroupMark />Continuous Infusions</GroupRow>
          <OrderRow order={infusion} />
        </OrderTable>
        <DetailsBox>
          <DetailsHead>
            <Svg size={7}><path d="M0 1h12M1 4h10l-5 7z" fill="#111" stroke="#111" /></Svg>
            Details for <DetailsDrug>atorvastatin</DetailsDrug>
          </DetailsHead>
          <Tabs>
            <Tab $active $w={50}><Icon kind="doc" size={10} />Details</Tab>
            <Tab $w={84}><Icon kind="chart" size={10} />Order Comments</Tab>
            <Tab $w={58}><Icon kind="doc" size={10} />Diagnoses</Tab>
          </Tabs>
          <DetailTools>
            <Svg size={11}><path d="M4 1h4v3h3v4H8v3H4V8H1V4h3z" fill="#777" /></Svg>
            <Svg size={11}><circle cx="4" cy="3" r="2.5" fill="#c92a2a" /><circle cx="7" cy="3.5" r="2" fill="#e0c02c" /><rect x="2" y="6" width="8" height="5" rx="1" fill="#17727a" /></Svg>
            <Svg size={10}><path d="M1 1v10M4 4v7M7 7v4M10 9v2" stroke="#888" strokeWidth="1.1" /></Svg>
            <ToolSquare $dark $ml={14}><Svg size={8}><path d="M4.5 1h3v5H10l-4 5-4-5h2.5z" fill="#777" /></Svg></ToolSquare>
            <ToolSquare $ml={-4}><Svg size={8}><path d="M3 2l3 3 3-3M3 7l3 3 3-3" fill="none" stroke="#333" strokeWidth="1.6" /></Svg></ToolSquare>
            <Remaining>Remaining Administrations: 30&nbsp;&nbsp;&nbsp;Stop: 09/23/22 20:59:00 EDT</Remaining>
          </DetailTools>
          <FormBox>
            <FormGrid>
              <Label $req>*Dose:</Label>
              <Field><Selection>20</Selection></Field>
              <Label $req>*Dose Unit:</Label>
              <FieldSelect value="mg" />

              <Label $req>*Route of administration:</Label>
              <FieldSelect value="Oral" />
              <Label $dim>Drug Form:</Label>
              <FieldSelect value="Tab" gray />

              <Label $req>*Frequency:</Label>
              <FieldSelect value="Daily" />
              <Label>Duration:</Label>
              <Field />

              <Label>Duration unit:</Label>
              <FieldSelect />
              <Label>PRN:</Label>
              <RadioGroup>
                <FormRadio><RoundBtn />Yes</FormRadio>
                <FormRadio><RoundBtn $on />No</FormRadio>
              </RadioGroup>

              <Label>PRN reason:</Label>
              <FieldSelect />
              <Label>Administer over:</Label>
              <Field />

              <Label>Administer over unit:</Label>
              <FieldSelect />
              <Label $req>*First Dose Date/Time:</Label>
              <FieldSelect value="08/24/22 21:00 EDT" />

              <Label>Stop Date/Time:</Label>
              <DateRow>
                <DateInput $w={67}>09/23/2022</DateInput>
                <SpinBox />
                <SmallDrop><Chevron /></SmallDrop>
                <DateInput $w={46}>2059</DateInput>
                <SpinBox />
                <TimeZone>EDT</TimeZone>
              </DateRow>
              <Label>First Dose Priority:</Label>
              <FieldSelect />

              <span />
              <Field />
              <span />
              <Field />
            </FormGrid>
            <FormBar>
              <Chevron up />
              <FormThumb />
              <BarArrow $top={37}><Chevron /></BarArrow>
            </FormBar>
          </FormBox>
        </DetailsBox>
        <Footer>
          <FootBtn $faded $w={92} $mr={5}>0 Missing Required Details</FootBtn>
          <FootBtn $w={85} $mr={4}>2 Unreconciled Order(s)</FootBtn>
          <FootBtn $w={54}>Dx Table</FootBtn>
          <ReconcileBox>
            <ReconcileLabel>Reconcile</ReconcileLabel>
            <AndWord>and</AndWord>
            <FootBtn $w={62} $mr={6}>Plan</FootBtn>
            <FootBtn $w={62}>Sign</FootBtn>
          </ReconcileBox>
          <CancelWrap><FootBtn $w={53}>Cancel</FootBtn></CancelWrap>
        </Footer>
      </ModalBody>
    </Modal>
    <IBeam width="10" height="24" viewBox="0 0 10 24">
      <path d="M1 1h3l1 1 1-1h3M5 2v20M1 23h3l1-1 1 1h3" fill="none" stroke="#666" />
    </IBeam>
  </Page>
);

export default App;
